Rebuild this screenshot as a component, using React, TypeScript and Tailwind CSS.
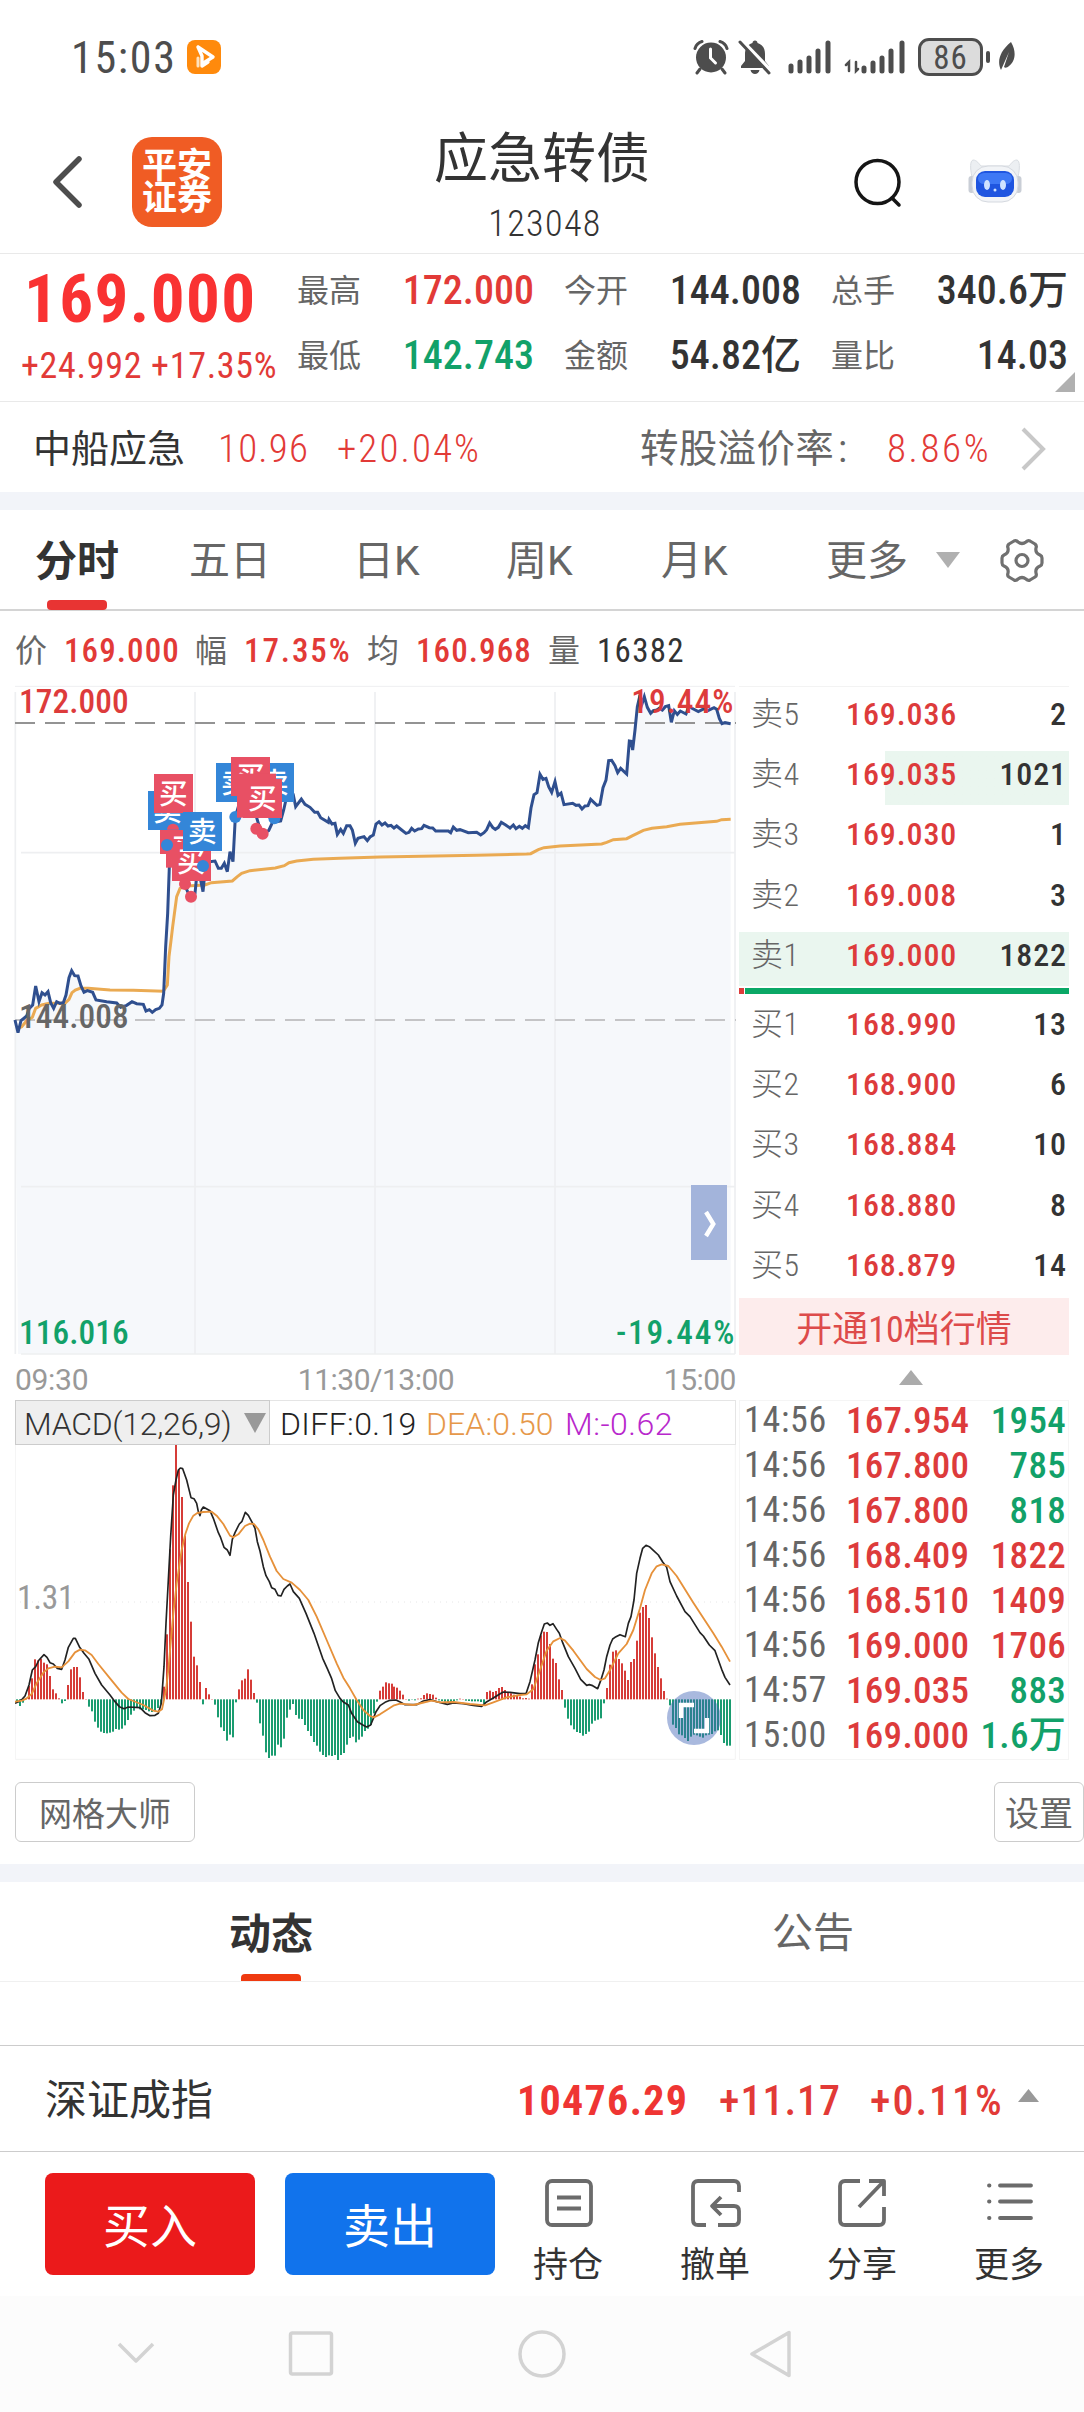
import React from 'react';
import { clsx } from 'clsx';

const stats = [
  { label: '最高', value: '172.000', color: 'text-[#e23a37]' },
  { label: '今开', value: '144.008', color: 'text-[#333]' },
  { label: '总手', value: '340.6万', color: 'text-[#333]' },
  { label: '最低', value: '142.743', color: 'text-[#12a169]' },
  { label: '金额', value: '54.82亿', color: 'text-[#333]' },
  { label: '量比', value: '14.03', color: 'text-[#333]' },
];

const asks = [
  { label: '卖5', price: '169.036', volume: '2', bg: '' },
  { label: '卖4', price: '169.035', volume: '1021', bg: 'bg-linear-to-r from-transparent from-[146px] to-[#eaf6ef] to-[146px]' },
  { label: '卖3', price: '169.030', volume: '1', bg: '' },
  { label: '卖2', price: '169.008', volume: '3', bg: '' },
  { label: '卖1', price: '169.000', volume: '1822', bg: 'bg-[#eaf6ef]' },
];

const bids = [
  { label: '买1', price: '168.990', volume: '13', bg: '' },
  { label: '买2', price: '168.900', volume: '6', bg: '' },
  { label: '买3', price: '168.884', volume: '10', bg: '' },
  { label: '买4', price: '168.880', volume: '8', bg: '' },
  { label: '买5', price: '168.879', volume: '14', bg: '' },
];

const trades = [
  { time: '14:56', price: '167.954', volume: '1954', up: false },
  { time: '14:56', price: '167.800', volume: '785', up: false },
  { time: '14:56', price: '167.800', volume: '818', up: false },
  { time: '14:56', price: '168.409', volume: '1822', up: true },
  { time: '14:56', price: '168.510', volume: '1409', up: true },
  { time: '14:56', price: '169.000', volume: '1706', up: true },
  { time: '14:57', price: '169.035', volume: '883', up: false },
  { time: '15:00', price: '169.000', volume: '1.6万', up: false },
];

// Chart coordinates are in thirds of a pixel
const pricePoints =
  '45,1020 54,1058 63,1022 80,1008 88,985 98,975 107,918 117,965 126,938 135,945 144,935 152,968 161,985 170,965 180,970 190,968 198,945 207,893 215,872 224,887 234,888 243,918 252,937 262,932 278,937 288,960 320,965 350,969 362,982 380,976 396,965 410,971 430,973 438,993 448,989 457,997 467,989 478,985 486,975 491,940 497,800 503,700 508,560 512,500 520,440 545,560 556,620 572,655 585,640 590,590 600,590 609,635 618,545 628,545 645,543 655,565 664,565 673,550 682,575 690,515 699,545 706,410 715,380 735,380 769,410 778,440 790,460 806,452 823,415 832,425 842,423 851,390 860,350 880,345 887,380 904,357 915,373 930,382 944,397 953,397 962,413 985,427 987,418 996,432 1005,430 1012,463 1022,448 1030,460 1040,437 1050,437 1057,450 1066,490 1074,475 1083,472 1092,470 1102,482 1110,471 1120,465 1128,432 1137,425 1146,435 1155,429 1164,438 1173,436 1182,444 1190,438 1205,450 1218,460 1227,457 1235,445 1244,453 1255,447 1265,446 1272,436 1288,443 1298,444 1307,453 1345,453 1352,458 1360,441 1370,451 1380,449 1405,458 1430,457 1442,465 1452,458 1460,449 1469,429 1478,442 1486,448 1495,442 1504,427 1516,434 1530,444 1540,435 1548,446 1558,439 1567,445 1576,437 1585,443 1593,384 1602,344 1611,338 1620,283 1629,298 1638,295 1646,320 1655,337 1665,305 1674,346 1683,339 1692,374 1718,370 1728,376 1737,375 1746,387 1755,378 1764,377 1772,358 1791,376 1800,373 1809,323 1818,300 1826,242 1835,241 1845,257 1853,278 1862,265 1880,282 1888,183 1893,184 1898,210 1905,150 1912,80 1920,45 1926,72 1933,50 1942,82 1952,100 1960,92 1970,90 1978,85 1987,90 1996,80 2006,77 2014,127 2023,92 2032,103 2041,93 2058,102 2067,78 2076,85 2095,95 2114,85 2123,92 2142,83 2150,88 2158,115 2166,131 2175,128 2192,131';

const avgPoints =
  '54,1045 65,1040 80,1022 97,1012 107,985 125,975 148,970 195,970 207,958 216,938 226,930 240,925 265,925 330,930 400,931 490,934 502,915 507,830 512,790 518,740 530,650 540,625 560,618 615,615 634,608 697,603 712,590 725,580 750,572 826,564 853,557 867,548 890,543 940,538 1020,535 1140,531 1430,526 1580,522 1592,521 1615,509 1632,503 1680,498 1805,492 1820,487 1840,479 1880,476 1898,467 1930,451 1956,445 2000,440 2040,433 2150,424 2165,419 2192,418';

const diffPoints =
  '45,790 54,786 66,778 75,768 87,735 97,690 107,680 117,660 132,644 141,652 150,668 160,672 172,685 185,688 195,660 205,622 220,595 226,595 238,620 252,640 267,658 285,700 305,735 330,765 345,785 358,800 372,806 385,801 420,803 435,818 450,827 465,826 475,820 484,790 492,680 498,550 505,420 512,290 520,165 528,120 535,90 541,84 548,86 560,120 573,173 582,176 590,190 595,215 600,227 604,210 610,201 630,212 640,235 655,278 662,293 672,322 682,330 690,346 697,298 705,278 718,252 726,244 736,217 745,226 758,250 765,265 772,305 780,333 790,380 798,407 808,425 815,443 825,448 834,466 843,468 852,448 862,438 870,432 880,455 898,475 918,520 942,580 968,655 982,686 995,716 1006,752 1020,775 1030,786 1045,795 1055,820 1072,845 1090,856 1100,861 1112,855 1120,835 1128,815 1140,797 1155,787 1170,781 1188,780 1202,787 1215,794 1250,794 1270,783 1290,779 1310,785 1342,793 1360,789 1390,791 1420,796 1445,799 1458,787 1480,774 1498,763 1510,756 1530,757 1560,761 1578,761 1590,725 1605,660 1615,608 1625,575 1633,552 1642,549 1650,556 1659,551 1670,568 1678,580 1688,608 1705,650 1725,685 1742,718 1760,736 1768,734 1778,737 1793,746 1802,722 1812,690 1820,650 1830,615 1838,597 1845,592 1860,584 1876,590 1885,550 1893,530 1902,480 1910,400 1920,355 1928,325 1938,316 1948,320 1960,331 1975,345 1988,366 2000,382 2010,425 2030,468 2055,515 2070,530 2100,578 2110,588 2128,615 2145,632 2165,688 2175,712 2190,735';

const deaPoints =
  '45,785 66,782 80,775 95,762 110,730 130,698 145,685 165,680 185,682 205,664 225,637 240,629 255,631 275,645 295,672 330,715 365,758 385,777 430,795 460,812 475,815 486,808 498,750 505,690 511,620 520,520 530,430 545,330 556,282 567,250 580,227 592,219 610,216 635,215 650,227 670,252 690,287 700,292 715,283 735,258 750,251 762,252 775,268 790,300 810,350 830,393 850,417 875,428 900,450 925,480 950,530 980,600 1010,670 1030,713 1050,745 1070,780 1090,810 1110,828 1122,832 1140,823 1160,810 1180,797 1200,791 1240,795 1265,789 1295,782 1320,787 1360,786 1410,792 1455,796 1480,787 1520,772 1560,765 1580,763 1600,748 1620,690 1640,632 1660,604 1680,594 1695,602 1720,632 1760,687 1785,711 1802,720 1815,715 1830,690 1855,640 1880,612 1900,570 1920,505 1935,450 1955,400 1970,379 1985,373 2005,378 2030,408 2080,488 2140,580 2165,620 2190,665';

const macdBars = [
  -10, -20, -10, 3, 40, 63, 120, 117, 122, 110, 105, 70, 30, 18, 3, -12, -5, 43, 90, 97,
  97, 66, 22, 1, -22, -36, -67, -85, -97, -101, -102, -100, -97, -89, -91, -88, -78, -62, -46, -34,
  -26, -30, -30, -32, -36, -38, -36, -26, -14, 38, 195, 450, 642, 763, 690, 607, 490, 352, 233, 128,
  102, 52, -15, 34, 15, 1, -16, -54, -84, -95, -124, -106, -114, -9, 30, 57, 62, 90, 59, 19,
  -10, -72, -109, -159, -176, -169, -169, -136, -144, -118, -55, -31, -14, -47, -58, -59, -77, -95, -110, -128,
  -139, -157, -167, -173, -168, -170, -167, -182, -167, -161, -136, -116, -112, -129, -121, -112, -95, -88, -77, -42,
  -7, 26, 38, 51, 48, 47, 38, 35, 26, 14, 1, -4, -1, -3, 2, 3, 13, 18, 16, 14,
  5, -3, -5, -7, -8, -9, -5, -3, 2, 1, -4, -5, -6, -6, -6, -8, -13, 22, 26, 22,
  25, 34, 37, 28, 22, 18, 14, 10, 8, 3, 4, 2, 45, 105, 135, 192, 203, 202, 166, 122,
  109, 60, 28, -25, -58, -78, -90, -98, -101, -109, -104, -97, -73, -64, -61, -57, -12, 34, 104, 143,
  147, 121, 108, 86, 58, 112, 121, 176, 260, 277, 283, 244, 186, 138, 97, 63, 25, 2, -18, -76,
  -86, -105, -108, -116, -125, -112, -106, -108, -112, -115, -108, -106, -104, -96, -93, -107, -131, -139, -139,
];

function StatusBar() {
  return (
    <div className="flex h-[112px] items-center pl-[71px] pr-[69px] pt-[2px] text-[#4d4d4d]">
      <span className="w-[116px] pt-px text-[44px] leading-none tracking-[1.700px]">15:03</span>
      <svg width="34" height="34" viewBox="0 0 34 34">
        <rect width="34" height="34" rx="8" fill="#ff8a0c" />
        <path d="M11 7l15 10l-8 5M11 7l4 9v10l6-4" fill="none" stroke="#fff" strokeWidth="3.400" strokeLinejoin="round" strokeLinecap="round" />
        <path d="M11 18v8" stroke="#ffe2bd" strokeWidth="3" strokeLinecap="round" />
      </svg>
      <div className="ml-auto flex items-center">
        {/* alarm */}
        <svg width="36" height="36" viewBox="0 0 36 36" fill="none" stroke="currentColor" strokeLinecap="round">
          <circle cx="18" cy="18.500" r="15" fill="currentColor" stroke="none" />
          <path d="M2 9.500C3 6 5.500 3.500 9 2.500M34 9.500C33 6 30.500 3.500 27 2.500M7 30l-3 4M29 30l3 4" strokeWidth="3" />
          <path d="M17.500 10v9l5 5" stroke="#fff" strokeWidth="3" />
        </svg>
        {/* muted bell */}
        <svg className="ml-[9px]" width="34" height="36" viewBox="0 0 34 36">
          <path d="M17 1.500c1.500 0 2.500 1 2.500 2.500C25 5.500 27 10 27 15v7l4 5v2H3v-2l4-5v-7C7 10 9 5.500 14.500 4c0-1.500 1-2.500 2.500-2.500zM12.500 31h9c-.5 2.500-2.500 4-4.500 4s-4-1.500-4.500-4z" fill="currentColor" />
          <path d="M4 2l30 31" stroke="#fff" strokeWidth="4" />
          <path d="M2 3l29 31" stroke="currentColor" strokeWidth="3" strokeLinecap="round" />
        </svg>
        <svg className="ml-[16px]" width="44" height="34" viewBox="0 0 44 34" stroke="currentColor" strokeWidth="5" strokeLinecap="round">
          <path d="M3 26v5M12 22v9M21 18v13M30 11v20M40 3v28" />
        </svg>
        <svg className="ml-[12px]" width="62" height="34" viewBox="0 0 62 34" fill="none" stroke="currentColor" strokeWidth="5" strokeLinecap="round">
          <path d="M20 28v3M29 23v8M38 18v13M47 11v20M58 3v28" />
          <path d="M2 25l3-3v9M12 22v9l2-2" strokeWidth="2.500" />
        </svg>
        <div className="ml-[12px] flex h-[38px] w-[65px] items-center justify-center rounded-[11px] border-3 border-[#4d4d4d] bg-[#dcdcdc] text-[33px] leading-none tracking-[1px]">
          86
        </div>
        <div className="ml-[3px] h-[12px] w-[4px] rounded-full bg-[#4d4d4d]" />
        <svg className="ml-[7px]" width="18" height="30" viewBox="0 0 18 30">
          <path d="M14 0C20 10 18 20 12 24C10 26 8 26 7 25L12 10L4 28C0 20 2 10 14 0z" fill="currentColor" />
        </svg>
      </div>
    </div>
  );
}

function Header() {
  return (
    <div className="grid h-[142px] grid-cols-[1fr_auto_1fr] border-b border-[#e9e9e9]">
      <div className="flex items-center pl-[51px] pb-[2px]">
        <svg width="32" height="54" viewBox="0 0 32 54" fill="none" stroke="#4d4d4d" strokeWidth="5.500" strokeLinecap="round" strokeLinejoin="round">
          <path d="M28 4L5 27l23 23" />
        </svg>
        <div className="ml-[49px] flex h-[90px] w-[90px] flex-col items-center justify-center rounded-[20px] bg-[#f05c24] pt-[3px] text-[35px] font-bold leading-[32px] text-white">
          <span>平安</span>
          <span>证券</span>
        </div>
      </div>
      <div className="flex flex-col items-center pt-[21px] text-[#333]">
        <span className="text-[54px] leading-[54px]">应急转债</span>
        <span className="mt-[17px] pl-[6px] text-[36px] font-light leading-[40px] tracking-[1.400px]">123048</span>
      </div>
      <div className="flex items-center justify-end pr-[62px]">
        <svg width="50" height="52" viewBox="0 0 50 52" fill="none" stroke="#151515" strokeWidth="3.500" strokeLinecap="round">
          <circle cx="24.500" cy="25" r="21.500" />
          <path d="M39 41l7 7" />
        </svg>
        <svg className="ml-[65px] mb-[4px]" width="54" height="44" viewBox="0 0 54 44">
          <path d="M4 18C2 9 2 2 5 1c4 0 6 4 8 6h28c2-2 4-6 8-6c3 1 3 8 1 17z" fill="#eceff2" stroke="#d9dde2" />
          <rect x="0.500" y="17" width="6" height="17" rx="3" fill="#c9ced6" />
          <rect x="47.500" y="17" width="6" height="17" rx="3" fill="#c9ced6" />
          <rect x="4" y="7" width="46" height="36" rx="16" fill="#f2f4f7" stroke="#d5d9df" />
          <rect x="8" y="12" width="38" height="26" rx="9" fill="#1f55e0" />
          <rect x="10" y="14" width="34" height="11" rx="6" fill="#3e78f5" />
          <ellipse cx="19" cy="26" rx="3" ry="5" fill="#cfe3ff" />
          <ellipse cx="35" cy="26" rx="3" ry="5" fill="#cfe3ff" />
          <circle cx="27" cy="31" r="1.500" fill="#cfe3ff" />
        </svg>
      </div>
    </div>
  );
}

function Quote() {
  return (
    <div className="relative flex h-[148px] border-b border-[#e9e9e9]">
      <div className="w-[297px]">
        <div className="pl-[24px] pt-[11px] text-[67px] font-bold leading-[68px] tracking-[1.400px] text-[#f93232]">169.000</div>
        <div className="whitespace-nowrap pl-[21px] pt-[11px] text-[36px] leading-[44px] tracking-[0.700px] text-[#e23a37]">+24.992 +17.35%</div>
      </div>
      <div className="grid grid-cols-[236px_236px_236px] content-start gap-x-[31px] pt-[5px]">
        {stats.map((item) => (
          <div key={item.label} className="-mr-px flex h-[65px] items-center justify-between">
            <span className="pb-px text-[32px] text-[#666]">{item.label}</span>
            <span className={clsx('pb-px text-[40px] font-medium', item.color)}>{item.value}</span>
          </div>
        ))}
      </div>
      <svg className="absolute bottom-[9px] right-[9px]" width="20" height="20">
        <path d="M20 0v20H0z" fill="#b0b0b0" />
      </svg>
    </div>
  );
}

function StockLink() {
  return (
    <div className="flex h-[90px] items-center pl-[33px] pr-[37px] pt-[4px] text-[38px] text-[#e23a37]">
      <span className="w-[185px] text-[#333]">中船应急</span>
      <span className="w-[119px] pt-px text-[39px] font-light tracking-[1.200px]">10.96</span>
      <span className="pt-px text-[39px] font-light tracking-[2.100px]">+20.04%</span>
      <span className="ml-auto w-[247px] whitespace-nowrap text-[38.500px] tracking-[0.300px] text-[#666]">转股溢价率<span className="pl-[4px]">:</span></span>
      <span className="w-[134px] pt-px text-[39px] font-light tracking-[2.600px]">8.86%</span>
      <svg width="26" height="44" viewBox="0 0 26 44" fill="none" stroke="#c8c8c8" strokeWidth="4">
        <path d="M2 2l20 20L2 42" />
      </svg>
    </div>
  );
}

function PeriodTabs() {
  return (
    <div className="flex h-[101px] items-center border-b-2 border-[#d4d4d4] pl-[35px] pt-[4px] text-[41px] text-[#666] [font-stretch:100%]">
      <div className="relative w-[154px] text-[42px] font-bold text-[#333]">
        分时
        <div className="absolute bottom-[-17px] left-[12px] h-[10px] w-[60px] rounded-[4px] bg-[#e83433]" />
      </div>
      <span className="w-[164px]">五日</span>
      <span className="w-[153px]">日K</span>
      <span className="w-[155px]">周K</span>
      <span className="w-[165px]">月K</span>
      <span className="w-[110px]">更多</span>
      <svg className="mb-[4px]" width="24" height="16"><path d="M0 0h24L12 16z" fill="#b0b0b0" /></svg>
      <svg className="ml-[40px] mb-[4px]" width="44" height="44" viewBox="0 0 44 44" fill="none" stroke="#707070" strokeWidth="3.200" strokeLinejoin="round">
        <path d="M14 3q2-1 4 1q4 3 8 0q2-2 4-1l5 3q2 2 1 4q-1 5 4 7q2 1 2 3v5q0 2-2 3q-5 2-4 7q1 3-1 4l-5 3q-2 1-4-1q-4-3-8 0q-2 2-4 1l-5-3q-2-1-1-4q1-5-4-7q-2-1-2-3v-5q0-2 2-3q5-2 4-7q-1-2 1-4z" />
        <circle cx="22" cy="22.500" r="6" />
      </svg>
    </div>
  );
}

function InfoLine() {
  return (
    <div className="flex h-[75px] items-center pl-[15px] pt-[4px] text-[33px] text-[#e23a37]">
      <span className="w-[49px] text-[32px] text-[#666]">价</span>
      <span className="w-[131px] font-medium tracking-[1.100px]">169.000</span>
      <span className="w-[49px] text-[32px] text-[#666]">幅</span>
      <span className="w-[123px] font-medium tracking-[1.900px]">17.35%</span>
      <span className="w-[49px] text-[32px] text-[#666]">均</span>
      <span className="w-[132px] font-medium tracking-[1.100px]">160.968</span>
      <span className="w-[49px] text-[32px] text-[#666]">量</span>
      <span className="tracking-[1.300px] text-[#333]">16382</span>
    </div>
  );
}

type BadgeProps = { x: number; y: number; kind: '买' | '卖' };

function Badge({ x, y, kind }: BadgeProps) {
  return (
    <g>
      <rect x={x} y={y} width="117" height="117" fill={kind === '买' ? '#e85064' : '#3486d8'} />
      <text x={x + 58} y={y + 91} textAnchor="middle" fontSize="86" fontWeight="500" fill="#fff">{kind}</text>
    </g>
  );
}

function PriceChart() {
  return (
    <svg className="block overflow-visible" width="721" height="669" viewBox="45 18 2163 2007">
      <polygon points={`54,2022 ${pricePoints} 2192,2022`} fill="#f6f8fb" />
      <g stroke="#eeeff1" strokeWidth="5" fill="none">
        <path d="M46 36V2022M585 36V2022M1125 36V2022M1665 36V2022M2205 36V2022M63 518H2205M63 1520H2205M63 2022H2205" />
        <path d="M45 19H2205" strokeWidth="3" />
      </g>
      <path d="M45 129H2208" stroke="#939393" strokeWidth="6" strokeDasharray="60 30" />
      <path d="M45 1020H2208" stroke="#c4c4c6" strokeWidth="6" strokeDasharray="60 30" />
      <polyline points={avgPoints} fill="none" stroke="#eaaa52" strokeWidth="9" />
      <polyline points={pricePoints} fill="none" stroke="#2f4f8f" strokeWidth="9" />
      <Badge x={480} y={405} kind="买" />
      <Badge x={498} y={446} kind="买" />
      <Badge x={516} y={486} kind="买" />
      <Badge x={444} y={333} kind="卖" />
      <Badge x={462} y={282} kind="买" />
      <Badge x={549} y={396} kind="卖" />
      <g fill="#3486d8">
        <circle cx="501" cy="495" r="18" />
        <circle cx="609" cy="558" r="18" />
        <circle cx="706" cy="411" r="18" />
        <circle cx="823" cy="415" r="18" />
      </g>
      <g fill="#e85064">
        <path d="M501 449a18 18 0 0 1 36 0z" />
        <circle cx="555" cy="612" r="18" />
        <circle cx="573" cy="650" r="18" />
        <circle cx="769" cy="446" r="18" />
        <circle cx="788" cy="461" r="18" />
      </g>
      <Badge x={648} y={249} kind="卖" />
      <Badge x={765} y={249} kind="卖" />
      <Badge x={693} y={231} kind="买" />
      <rect x="711" y="281" width="117" height="132" fill="#e85064" />
      <Badge x={729} y={297} kind="买" />
      <g fontSize="100" fontWeight="500" fill="#dd3b3b">
        <text x="57" y="98" textLength="329">172.000</text>
        <text x="1894" y="98" textLength="306">19.44%</text>
        <text x="57" y="1043" textLength="329" fill="#666">144.008</text>
        <text x="57" y="1992" textLength="329" fill="#12a169">116.016</text>
        <text x="1848" y="1992" textLength="355" fill="#12a169">-19.44%</text>
      </g>
      <rect x="2073" y="1515" width="108" height="225" fill="#a3b4db" />
      <path d="M2118 1596l22 36l-22 36" fill="none" stroke="#fff" strokeWidth="13" />
    </svg>
  );
}

function MacdChart() {
  return (
    <svg className="block" width="721" height="315" viewBox="45 15 2163 945">
      <path d="M46 15V958H2206V15" fill="none" stroke="#f3f3f3" strokeWidth="3" />
      <path d="M60 486H2206" stroke="#e6e6e6" strokeWidth="3" strokeDasharray="3 15" />
      {macdBars.map((v, i) => (
        <rect
          key={i}
          x={48 + Math.round(i * 2.996) * 3}
          y={v > 0 ? 778 - v : 778}
          width="6"
          height={Math.abs(v)}
          fill={v > 0 ? '#d63c38' : '#1a9c70'}
        />
      ))}
      <polyline points={diffPoints} fill="none" stroke="#222" strokeWidth="5" strokeLinejoin="round" />
      <polyline points={deaPoints} fill="none" stroke="#e6913a" strokeWidth="5.500" strokeLinejoin="round" />
      <text x="51" y="507" textLength="172" fontSize="100" fill="#999">1.31</text>
      <circle cx="2082" cy="834" r="81" fill="#4063b5" fillOpacity="0.45" />
      <path d="M2043 834v-39h39M2121 834v39h-39" fill="none" stroke="#fff" strokeWidth="13" />
    </svg>
  );
}

function ChartPanel() {
  return (
    <div className="w-[721px]">
      <PriceChart />
      <div className="flex h-[45px] items-center justify-between pt-[4px] text-[30px] text-[#999] [font-stretch:100%]">
        <span className="tracking-[-0.300px]">09:30</span>
        <span className="tracking-[-0.500px]">11:30/13:00</span>
        <span className="tracking-[-0.500px]">15:00</span>
      </div>
      <div className="flex h-[45px] items-center border border-[#e5e5e5] text-[32px] [font-stretch:100%]">
        <div className="-ml-px flex h-[45px] w-[255px] shrink-0 items-center justify-between border border-[#ccc] bg-[#efefef] pl-[8px] pr-[3px] text-[#333]">
          <span className="pt-[3px] font-light tracking-[-0.300px]">MACD(12,26,9)</span>
          <svg width="22" height="20"><path d="M0 0h22L11 20z" fill="#999" /></svg>
        </div>
        <span className="ml-[10px] w-[146px] whitespace-nowrap pt-[3px] font-light tracking-[0.400px] text-[#222]">DIFF:0.19</span>
        <span className="w-[139px] whitespace-nowrap pt-[3px] font-light tracking-[0.100px] text-[#e6984a]">DEA:0.50</span>
        <span className="whitespace-nowrap pt-[3px] font-light tracking-[0.500px] text-[#b828cc]">M:-0.62</span>
      </div>
      <MacdChart />
    </div>
  );
}

function DepthRow({ row, className }: { row: (typeof asks)[number]; className: string }) {
  return (
    <div className="flex h-[60.400px] items-center">
      <div className={clsx('flex h-[54px] w-full items-center pl-[12px] pr-[2px] text-[32px]', row.bg, className)}>
        <span className="w-[95px] font-light tracking-[0.500px] text-[#666]">{row.label}</span>
        <span className="font-medium tracking-[0.900px] text-[#dd3b3b]">{row.price}</span>
        <span className="ml-auto font-medium tracking-[0.900px] text-[#333]">{row.volume}</span>
      </div>
    </div>
  );
}

function DepthPanel() {
  return (
    <div className="ml-[3px] w-[330px]">
      <div className="h-[302px] border-t border-[#f3f3f3]">
        {asks.map((row) => <DepthRow key={row.label} row={row} className="pb-[7px]" />)}
      </div>
      <div className="flex h-[6px] gap-px">
        <div className="w-[5px] bg-[#dd3b3b]" />
        <div className="flex-1 bg-[#0aa866]" />
      </div>
      <div className="h-[304px]">
        {bids.map((row) => <DepthRow key={row.label} row={row} className="pb-[1px]" />)}
      </div>
      <div className="flex h-[57px] items-center justify-center bg-[#fdecec] pt-[6px] text-[36px] text-[#dd4b4b]">开通10档行情</div>
      <div className="flex h-[45px] items-center justify-center">
        <svg className="ml-[13px]" width="24" height="15"><path d="M0 15h24L12 0z" fill="#ababab" /></svg>
      </div>
      <div className="h-[360px] border border-[#f5f5f5]">
        {trades.map((t, i) => (
          <div key={i} className="flex h-[45px] items-center whitespace-nowrap pl-[4px] pr-[2px] pb-[7px] text-[37px] leading-none">
            <span className="w-[102px] text-[36px] tracking-[0.700px] text-[#666]">{t.time}</span>
            <span className="font-medium tracking-[0.300px] text-[#dd3b3b]">{t.price}</span>
            <span className={clsx('ml-auto font-medium tracking-[0.300px]', t.up ? 'text-[#dd3b3b]' : 'text-[#12a169]')}>{t.volume}</span>
          </div>
        ))}
      </div>
    </div>
  );
}

function IndexBar() {
  return (
    <div className="flex h-[107px] items-center border-y border-[#ccc] pl-[45px] pr-[45px] pt-[4px] text-[42px] text-[#333]">
      <span className="flex-1">深证成指</span>
      <span className="w-[202px] font-bold tracking-[1.300px] text-[#ef3533]">10476.29</span>
      <span className="w-[151px] font-medium tracking-[1px] text-[#e23a37]">+11.17</span>
      <span className="w-[148px] font-medium tracking-[2px] text-[#e23a37]">+0.11%</span>
      <svg className="-mt-[10px]" width="21" height="13"><path d="M0 13h21L10.500 0z" fill="#999" /></svg>
    </div>
  );
}

const actions = [
  {
    label: '持仓',
    icon: (
      <>
        <rect x="2" y="2" width="44" height="44" rx="5" />
        <path d="M12 18.500h24M12 29.500h24" />
      </>
    ),
  },
  {
    label: '撤单',
    icon: (
      <>
        <path d="M47 13V7q0-5-5-5H6Q1 2 1 7v34q0 5 5 5h8" />
        <path d="M26 46h16q5 0 5-5V32q0-5-5-5H20M29 18l-9 9l9 9" />
      </>
    ),
  },
  {
    label: '分享',
    icon: (
      <>
        <path d="M21 2H6Q1 2 1 7v34q0 5 5 5h34q5 0 5-5V28" />
        <path d="M30 2h15v15M45 2L20 28" />
      </>
    ),
  },
  {
    label: '更多',
    icon: (
      <>
        <path d="M14 6.500h31M14 22.500h31M14 39h31M3 6.500h.5M3 22.500h.5M3 39h.5" strokeLinecap="round" />
      </>
    ),
  },
];

function ActionBar() {
  return (
    <div className="flex h-[144px] pl-[45px] pt-[21px]">
      <button className="h-[102px] w-[210px] rounded-[8px] bg-[#eb1a1b] pt-[6px] text-[47px] text-white">买入</button>
      <button className="ml-[30px] h-[102px] w-[210px] rounded-[8px] bg-[#1173ec] pt-[6px] text-[47px] text-white">卖出</button>
      <div className="grid grid-cols-[147px_147px_147px_147px] pt-[6px]">
        {actions.map((a) => (
          <div key={a.label} className="flex flex-col items-center text-[#333]">
            <svg width="48" height="48" viewBox="0 0 48 48" fill="none" stroke="#6b6b6b" strokeWidth="3.800" strokeLinejoin="round" overflow="visible">
              {a.icon}
            </svg>
            <span className="-ml-px mt-[19px] text-[35px] leading-[40px]">{a.label}</span>
          </div>
        ))}
      </div>
    </div>
  );
}

function NavBar() {
  return (
    <div className="h-[116px] bg-[#fcfcfc] pl-[116px]">
      <svg className="h-[116px] w-[700px]" viewBox="0 0 700 116" fill="none" stroke="#d3d3d3" strokeWidth="3.500" strokeLinejoin="round">
        <path d="M3 48l17 17l17-17" />
        <rect x="174.500" y="37" width="41" height="41" rx="2" />
        <circle cx="426" cy="58" r="22" />
        <path d="M673 36.500v43L636 58z" />
      </svg>
    </div>
  );
}

export default function App() {
  return (
    <div className="h-[2412px] w-[1084px] overflow-hidden bg-white font-['Roboto','Noto_Sans_CJK_SC',sans-serif] [font-stretch:87%]">
      <StatusBar />
      <Header />
      <Quote />
      <StockLink />
      <div className="h-[18px] bg-[#f2f4f9]" />
      <PeriodTabs />
      <InfoLine />
      <div className="flex pl-[15px]">
        <ChartPanel />
        <DepthPanel />
      </div>
      <div className="flex h-[104px] items-start justify-between pl-[15px] pt-[22px] text-[33px] text-[#666]">
        <div className="flex h-[60px] w-[180px] items-center justify-center rounded-[6px] border border-[#ccc] pt-[5px]">网格大师</div>
        <div className="flex h-[60px] w-[90px] items-center justify-center rounded-[6px] border border-[#ccc] pt-[5px] text-[34px]">设置</div>
      </div>
      <div className="h-[18px] bg-[#f2f4f9]" />
      <div className="grid h-[100px] grid-cols-2 border-b border-[#f0f0f0] text-[41px] text-[#666]">
        <div className="relative flex items-center justify-center pt-[5px] text-[42px] font-bold text-[#333]">
          动态
          <div className="absolute bottom-0 h-[7px] w-[60px] rounded-t-[4px] bg-[#ef3a10]" />
        </div>
        <div className="flex items-center justify-center pt-[5px]">公告</div>
      </div>
      <div className="h-[63px]" />
      <IndexBar />
      <ActionBar />
      <NavBar />
    </div>
  );
}
